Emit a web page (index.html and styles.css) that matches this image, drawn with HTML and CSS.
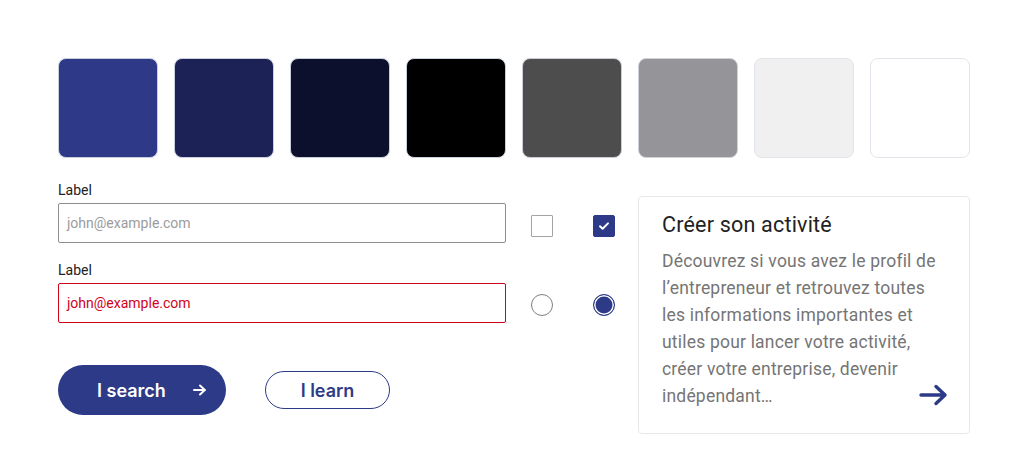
FILE: index.html
```html
<!DOCTYPE html>
<html lang="fr">
<head>
<meta charset="utf-8">
<title>UI kit</title>
<link rel="stylesheet" href="styles.css">
</head>
<body>
<main class="page">
  <div class="swatches">
    <div class="swatch c1"></div>
    <div class="swatch c2"></div>
    <div class="swatch c3"></div>
    <div class="swatch c4"></div>
    <div class="swatch c5"></div>
    <div class="swatch c6"></div>
    <div class="swatch c7"></div>
    <div class="swatch c8"></div>
  </div>
  <div class="lower">
    <div class="left">
      <div class="row">
        <div class="field">
          <label class="label">Label</label>
          <div class="input placeholder">john@example.com</div>
        </div>
        <div class="controls">
          <span class="checkbox"></span>
          <span class="checkbox checked">
            <svg width="14" height="14" viewBox="0 0 14 14"><path d="M3 7.2l2.6 2.6L11 4.4" fill="none" stroke="#fff" stroke-width="2" stroke-linecap="round" stroke-linejoin="round"/></svg>
          </span>
        </div>
      </div>
      <div class="row row2">
        <div class="field">
          <label class="label">Label</label>
          <div class="input error">john@example.com</div>
        </div>
        <div class="controls">
          <span class="radio"></span>
          <span class="radio checked"></span>
        </div>
      </div>
      <div class="buttons">
        <button class="btn primary">I search
          <svg width="16" height="14" viewBox="0 0 16 14"><path d="M2 7h11M8 2.5L12.8 7 8 11.5" fill="none" stroke="#fff" stroke-width="2" stroke-linecap="round" stroke-linejoin="round"/></svg>
        </button>
        <button class="btn outline">I learn</button>
      </div>
    </div>
    <article class="card">
      <h2 class="card-title">Créer son activité</h2>
      <p class="card-text">Découvrez si vous avez le profil de l’entrepreneur et retrouvez toutes les informations importantes et utiles pour lancer votre activité, créer votre entreprise, devenir indépendant…</p>
      <svg class="card-arrow" width="30" height="24" viewBox="0 0 30 24"><path d="M2 12h24M17 3.5L26 12l-9 8.5" fill="none" stroke="#2d3a87" stroke-width="3.4" stroke-linecap="round" stroke-linejoin="round"/></svg>
    </article>
  </div>
</main>
</body>
</html>
```
FILE: styles.css
```css
* { box-sizing: border-box; }
html, body { margin: 0; padding: 0; background: #fff; }
body { font-family: Roboto, "Liberation Sans", sans-serif; color: #222; }

.page { padding: 58px 0 0 58px; width: 1028px; }

.swatches { display: flex; gap: 16px; }
.swatch {
  width: 100px; height: 100px; border-radius: 8px;
  border: 1px solid #c8d0de;
}
.c1 { background: #2e3a87; }
.c2 { background: #1c2256; }
.c3 { background: #0c102c; }
.c4 { background: #000; }
.c5 { background: #4d4d4d; border-color: #c9ced6; }
.c6 { background: #959498; border-color: #cfd3da; }
.c7 { background: #f0f0f0; border-color: #dfe4ea; }
.c8 { background: #fff; border-color: #dfe4ea; }

.lower { display: flex; gap: 23px; margin-top: 24px; align-items: flex-start; }
.left { width: 557px; }

.row { display: flex; align-items: flex-end; }
.row2 { margin-top: 19px; }
.field { width: 448px; }
.label { display: block; font-size: 14px; line-height: 16px; color: #222; margin-bottom: 5px; }
.input {
  height: 40px; border: 1px solid #8d8d8d; border-radius: 2px;
  padding: 0 8px; font-size: 14px; line-height: 38px;
}
.placeholder { color: #9b9b9b; }
.error { border-color: #d0021b; color: #d0021b; }

.controls { display: flex; gap: 40px; margin-left: 25px; height: 40px; align-items: center; padding-top: 5px; }
.checkbox {
  width: 22px; height: 22px; border: 1px solid #a3a3a3; border-radius: 1px;
  display: flex; align-items: center; justify-content: center; background: #fff;
}
.checkbox.checked { background: #2d3a87; border-color: #2d3a87; border-radius: 2px; }
.radio {
  width: 22px; height: 22px; border: 1px solid #7f7f7f; border-radius: 50%; background: #fff;
}
.radio.checked { border-color: #2d3a87; background: #2d3a87; box-shadow: inset 0 0 0 1.5px #fff; }
.row2 .controls { padding-top: 3px; }

.buttons { display: flex; align-items: center; gap: 39px; margin-top: 42px; }
.btn {
  font-family: Inter, "Liberation Sans", sans-serif; font-weight: 600; font-size: 18px;
  border-radius: 999px; cursor: pointer; display: flex; align-items: center;
}
.primary {
  width: 168px; height: 50px; background: #2d3a87; color: #fff; border: none;
  padding: 0 18px 0 39px; justify-content: space-between;
}
.outline {
  width: 125px; height: 38px; background: #fff; color: #2d3a87; border: 1px solid #2d3a87;
  justify-content: center; padding: 0;
}

.card {
  width: 332px; height: 238px; margin-top: 14px; border: 1px solid #e6e8eb; border-radius: 4px;
  padding: 13px 28px 0 23px; position: relative;
}
.card-title { margin: 0; font-weight: 400; font-size: 21.5px; line-height: 30px; color: #222; letter-spacing: 0.2px; }
.card-text { margin: 8px 0 0; font-size: 17.5px; line-height: 27px; color: #757575; letter-spacing: 0.2px; }
.card-arrow { position: absolute; right: 20px; bottom: 26px; }
```
